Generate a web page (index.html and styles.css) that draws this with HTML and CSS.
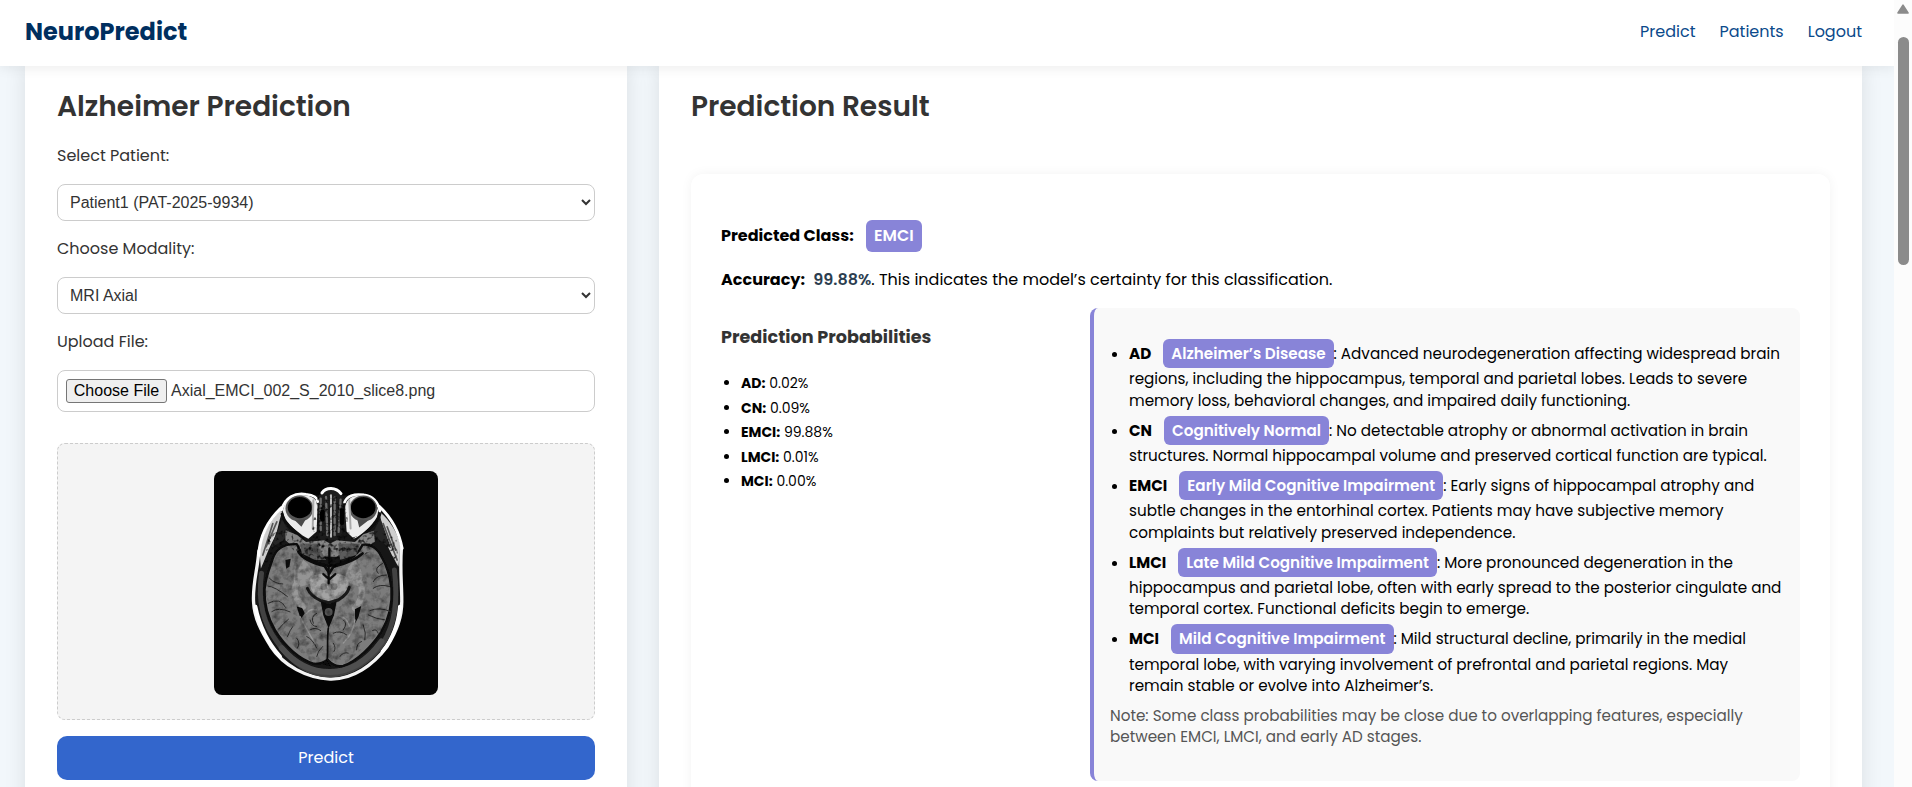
FILE: index.html
```html
<!DOCTYPE html>
<html lang="en">
<head>
<meta charset="utf-8">
<title>NeuroPredict</title>
<link rel="stylesheet" href="styles.css">
</head>
<body>
<div class="page">
  <header class="navbar">
    <div class="logo">NeuroPredict</div>
    <nav class="links"><a>Predict</a><a>Patients</a><a>Logout</a></nav>
  </header>
  <main class="main">
    <section class="panel form-panel">
      <h2 class="title">Alzheimer Prediction</h2>
      <label class="label">Select Patient:</label>
      <select class="select"><option>Patient1 (PAT-2025-9934)</option></select>
      <label class="label">Choose Modality:</label>
      <select class="select"><option>MRI Axial</option></select>
      <label class="label">Upload File:</label>
      <div class="file"><button class="choose">Choose File</button><span>Axial_EMCI_002_S_2010_slice8.png</span></div>
      <div class="preview">
        <svg class="scan" viewBox="41 32 674 674">
          <defs>
            <filter id="soft"><feGaussianBlur stdDeviation="2"/></filter>
            <filter id="grain" x="0" y="0" width="100%" height="100%">
              <feTurbulence type="fractalNoise" baseFrequency="0.05" numOctaves="3" seed="4"/>
              <feColorMatrix values="0 0 0 0 0  0 0 0 0 0  0 0 0 0 0  0.9 0 0 0 -0.36"/>
              <feComposite in2="SourceGraphic" operator="in"/>
            </filter>
            <filter id="speck" x="0" y="0" width="100%" height="100%">
              <feTurbulence type="fractalNoise" baseFrequency="0.08" numOctaves="2" seed="9"/>
              <feColorMatrix values="0 0 0 0 0  0 0 0 0 0  0 0 0 0 0  3 0 0 0 -1.55"/>
              <feComposite in2="SourceGraphic" operator="in"/>
            </filter>
          </defs>
          <rect x="41" y="32" width="674" height="674" fill="#030303"/>
          <g filter="url(#soft)" stroke-linecap="round" stroke-linejoin="round">
            <!-- scalp -->
            <path d="M244 140C205 175 180 225 172 275C170 330 158 370 160 425C162 480 185 520 212 560C250 620 320 655 390 658C460 660 520 615 562 560C592 510 607 470 606 420C606 370 604 330 606 260C596 215 570 170 535 135L500 105H290Z" fill="#161616"/>
            <path d="M176 272C172 330 157 370 160 425C162 475 184 515 212 560C250 618 320 655 390 658C460 660 520 615 562 560C592 510 607 470 606 420C606 370 600 330 605 262" fill="none" stroke="#f4f4f4" stroke-width="10"/>
            <path d="M166 440C178 500 200 545 240 590M600 440C596 490 580 535 548 575" fill="none" stroke="#fff" stroke-width="11"/>
            <!-- skull marrow -->
            <path d="M184 340C172 430 190 490 230 545C275 610 330 645 390 646C455 645 515 600 550 550C585 490 595 430 584 330" fill="none" stroke="#424242" stroke-width="15"/>
            <path d="M245 565C285 612 335 637 390 637C450 636 500 607 545 545" fill="none" stroke="#505050" stroke-width="18"/>
            <!-- temples -->
            <path d="M240 150C205 190 180 230 179 285L182 325C198 290 205 265 222 235C236 205 235 180 246 158Z" fill="#cfcfcf"/>
            <path d="M540 155C570 180 592 215 602 255L596 320C578 290 562 260 548 215Z" fill="#cfcfcf"/>
            <path d="M230 185L198 260M218 190L188 285M562 200L588 270M550 190L592 300" stroke="#555" stroke-width="5"/>
            <path d="M244 142C202 182 178 225 176 285M538 138C574 172 598 215 607 265" fill="none" stroke="#fff" stroke-width="9"/>
            <path d="M245 178C235 210 220 235 212 268C235 245 262 240 270 218Z" fill="#252525"/>
            <path d="M542 175L574 265C548 250 530 232 518 218Z" fill="#252525"/>
            <!-- nose -->
            <path d="M352 120L362 93Q392 74 422 95L436 122L440 190L418 240H362L346 190Z" fill="#1c1c1c"/>
            <path d="M366 98C378 80 408 80 423 100" fill="none" stroke="#fff" stroke-width="9"/>
            <path d="M362 115V210M378 110L382 225M404 112V225M422 118L416 215" stroke="#6c6c6c" stroke-width="7" stroke-dasharray="14 7"/>
            <path d="M393 105V230" stroke="#bbb" stroke-width="6"/>
            <path d="M367 155V178M426 150V188" stroke="#050505" stroke-width="14"/>
            <!-- orbits -->
            <path d="M248 152C254 118 280 103 312 105C340 107 356 120 352 146L350 214L325 236C304 226 272 198 255 180Z" fill="#ececec"/>
            <path d="M535 152C526 118 498 103 468 107C446 110 434 128 436 150L440 215L462 236C482 226 514 200 530 180Z" fill="#ececec"/>
            <path d="M244 150C254 112 285 96 318 102C340 104 352 112 353 124M434 126C440 108 462 99 492 104C520 108 535 128 540 152" fill="none" stroke="#fff" stroke-width="8"/>
            <ellipse cx="298" cy="145" rx="42" ry="39" fill="#555"/>
            <ellipse cx="490" cy="145" rx="42" ry="39" fill="#555"/>
            <ellipse cx="299" cy="142" rx="36" ry="32" fill="#020202"/>
            <ellipse cx="490" cy="142" rx="37" ry="32" fill="#020202"/>
            <path d="M284 180L318 176L304 200ZM472 177L506 180L478 202Z" fill="#4b4b4b"/>
            <path d="M340 120L338 205M448 120L452 205" stroke="#aaa" stroke-width="6"/>
            <path d="M246 162C252 190 285 215 310 240M540 162C530 190 495 222 470 240" fill="none" stroke="#0d0d0d" stroke-width="9"/>
            <!-- skull base -->
            <path d="M256 210L290 224L318 246L372 240L390 250L410 240L465 246L490 222L522 212L525 245L480 275L440 290H340L290 270L256 240Z" fill="#858585"/>
            <!-- brain -->
            <path d="M290 252C255 250 228 265 218 295C208 325 196 350 193 390C192 430 201 470 224 510C254 560 300 600 342 612C360 614 374 606 383 600C394 612 408 624 430 618C472 604 515 560 545 515C568 475 578 430 575 385C570 345 560 315 545 290C532 262 508 250 488 254C476 282 450 300 420 312L386 318L352 308C325 298 302 282 290 252Z" fill="#7c7c7c" stroke="#0b0b0b" stroke-width="7"/>
            <path d="M310 300Q350 330 340 370L300 380Q280 340 310 300ZM465 300Q430 330 440 365L478 380Q500 340 465 300Z" fill="#949494"/>
            <path d="M330 355Q350 335 388 345Q430 335 446 360Q450 395 418 412L388 425L352 412Q325 390 330 355Z" fill="#a4a4a4"/>
            <path d="M290 370Q270 400 310 440M482 370Q495 410 465 445" fill="none" stroke="#989898" stroke-width="18"/>
            <path d="M300 250L350 250L378 300L345 300L305 280ZM415 250L480 250L470 285L420 300Z" fill="#5c5c5c"/>
            <!-- cisterns -->
            <path d="M295 275C310 300 350 312 374 318L388 340L400 320C425 314 465 300 488 280" fill="none" stroke="#0b0b0b" stroke-width="8"/>
            <path d="M388 265V310M386 320V370M370 342L388 358L406 342" fill="none" stroke="#111" stroke-width="7"/>
            <path d="M322 385C330 405 345 415 362 422L386 428L415 420C432 410 444 398 448 382" fill="none" stroke="#1c1c1c" stroke-width="9"/>
            <path d="M362 424L386 432L410 424L402 466L386 505L370 466Z" fill="#090909"/>
            <circle cx="386" cy="456" r="12" fill="#555"/>
            <circle cx="371" cy="380" r="10" fill="#7c7c7c"/><circle cx="402" cy="380" r="10" fill="#7c7c7c"/>
            <path d="M290 440L306 444L314 460L302 478ZM465 448L484 438L476 470L466 490Z" fill="#080808"/>
            <path d="M256 300L272 296L268 320L258 326Z" fill="#111"/>
            <path d="M385 505C380 540 386 580 380 614" fill="none" stroke="#0a0a0a" stroke-width="5"/>
            <path d="M362 612L380 600L394 620Z" fill="#070707"/>
            <!-- sulci -->
            <path d="M208 355Q225 372 248 372M203 378Q225 380 262 410M204 430Q240 410 256 442M215 455Q235 440 270 456M235 508Q250 490 265 478M262 530Q270 510 278 500M292 565Q302 550 290 535M330 480Q335 500 350 500M350 460Q330 470 340 490M330 510Q345 500 362 512M320 530Q340 540 350 565M350 590Q352 575 368 560M548 310Q520 325 535 340M560 345Q530 345 520 365M570 380Q540 370 520 385M572 455Q540 440 510 452M555 480Q530 478 505 465M535 520Q530 505 518 512M490 495Q500 520 495 540M430 480Q445 490 430 510M400 520Q420 510 440 525M470 570Q470 550 485 545M400 550Q410 565 402 575M420 590Q430 575 445 580" fill="none" stroke="#2d2d2d" stroke-width="3"/>
            <path d="M300 470Q325 520 345 550M465 480Q460 520 430 550M285 320Q280 400 300 440M480 340Q495 400 478 435M320 460Q330 445 350 450M420 470Q440 470 448 500" fill="none" stroke="#9a9a9a" stroke-width="4"/>
          </g>
          <path d="M256 250L318 252L388 255L460 252L525 250L545 290L575 385L545 515L430 618L342 612L224 510L193 390L218 295Z" filter="url(#grain)"/>
          <path d="M205 225L256 205L330 240L352 110H436L450 235L520 210L590 230L596 320L550 250L485 290L388 330L300 290L255 245L190 320Z" filter="url(#speck)"/>
        </svg>
      </div>
      <button class="predict">Predict</button>
    </section>

    <section class="panel result-panel">
      <h2 class="title">Prediction Result</h2>
      <div class="card">
        <p class="row class-row"><b>Predicted Class:</b> <span class="badge">EMCI</span></p>
        <p class="row acc-row"><b>Accuracy:</b> <span class="acc">99.88%</span>. This indicates the model’s certainty for this classification.</p>
        <div class="cols">
          <div class="probs">
            <h4 class="subtitle">Prediction Probabilities</h4>
            <ul class="prob-list">
              <li><b>AD:</b> 0.02%</li>
              <li><b>CN:</b> 0.09%</li>
              <li><b>EMCI:</b> 99.88%</li>
              <li><b>LMCI:</b> 0.01%</li>
              <li><b>MCI:</b> 0.00%</li>
            </ul>
          </div>
          <div class="explain">
            <ul class="class-list">
              <li><b>AD</b> <span class="badge">Alzheimer’s Disease</span>: Advanced neurodegeneration affecting widespread brain<br>regions, including the hippocampus, temporal and parietal lobes. Leads to severe<br>memory loss, behavioral changes, and impaired daily functioning.</li>
              <li><b>CN</b> <span class="badge">Cognitively Normal</span>: No detectable atrophy or abnormal activation in brain<br>structures. Normal hippocampal volume and preserved cortical function are typical.</li>
              <li><b>EMCI</b> <span class="badge">Early Mild Cognitive Impairment</span>: Early signs of hippocampal atrophy and<br>subtle changes in the entorhinal cortex. Patients may have subjective memory<br>complaints but relatively preserved independence.</li>
              <li><b>LMCI</b> <span class="badge">Late Mild Cognitive Impairment</span>: More pronounced degeneration in the<br>hippocampus and parietal lobe, often with early spread to the posterior cingulate and<br>temporal cortex. Functional deficits begin to emerge.</li>
              <li><b>MCI</b> <span class="badge">Mild Cognitive Impairment</span>: Mild structural decline, primarily in the medial<br>temporal lobe, with varying involvement of prefrontal and parietal regions. May<br>remain stable or evolve into Alzheimer’s.</li>
            </ul>
            <p class="note">Note: Some class probabilities may be close due to overlapping features, especially<br>between EMCI, LMCI, and early AD stages.</p>
          </div>
        </div>
      </div>
    </section>
  </main>
</div>
<div class="scrollbar">
  <svg class="arrow" viewBox="0 0 12 10"><path d="M6 1.2L11 9H1Z" fill="#8b8b8b" stroke="#8b8b8b" stroke-width="1.6" stroke-linejoin="round"/></svg>
  <div class="thumb"></div>
</div>
</body>
</html>
```
FILE: styles.css
```css
* { box-sizing: border-box; }
body {
  margin: 0; height: 787px; overflow: hidden; display: flex;
  font-family: "Poppins", Inter, "Open Sans", sans-serif;
  font-size: 16px; line-height: 24px; color: #000; background: #f2f7fb;
}
.page { width: 1894px; height: 787px; overflow: hidden; display: flex; flex-direction: column; }
.navbar {
  height: 66px; flex: none; background: #fff; padding: 0 32px 3px 25px;
  display: flex; align-items: center; justify-content: space-between;
  box-shadow: 0 2px 12px rgba(0,0,0,.08); z-index: 2; position: relative;
}
.logo { font-size: 24px; font-weight: 700; color: #002f5f; white-space: nowrap; }
.links { display: flex; gap: 24px; color: #0b4a8b; }
.main { flex: 1; min-height: 0; display: flex; gap: 32px; padding: 0 32px 0 25px; overflow: hidden; }
.panel { background: #fff; height: 900px; padding: 23px 32px 0; box-shadow: 0 0 20px rgba(0,0,0,.1); flex: none; }
.form-panel { width: 602px; display: flex; flex-direction: column; }
.result-panel { width: 1203px; }
.title { margin: 0; height: 36px; line-height: 36px; font-size: 28px; font-weight: 600; color: #333; white-space: nowrap; }
.label { color: #333; height: 24px; margin-top: 19px; }
.select {
  height: 37px; margin-top: 16px; padding: 8px; border: 1px solid #ccc; border-radius: 8px;
  background: #fff; color: #333; font: 16px "Liberation Sans", Arial, sans-serif;
}
.select + .label { margin-top: 16px; }
.file {
  height: 42px; margin-top: 16px; padding-left: 8px; border: 1px solid #ccc; border-radius: 8px;
  display: flex; align-items: center; gap: 4px; color: #333; font: 16px "Liberation Sans", Arial, sans-serif;
}
.choose {
  width: 101px; height: 24px; padding: 0; border: 1px solid #767676; border-radius: 3px;
  background: #efefef; color: #000; font: 16px "Liberation Sans", Arial, sans-serif;
}
.preview {
  height: 277px; margin-top: 31px; padding-top: 3px; border: 1px dashed #ccc; border-radius: 8px; background: #f4f4f4;
  display: flex; align-items: center; justify-content: center;
}
.scan { width: 224px; height: 224px; border-radius: 8px; }
.predict { height: 44px; margin-top: 16px; border: 0; border-radius: 10px; background: #3366cc; color: #fff; font: inherit; }
.card {
  margin-top: 49px; height: 760px; padding: 46px 30px 0; border-radius: 12px; background: #fff;
  box-shadow: 0 0 12px rgba(0,0,0,.05);
}
.row { margin: 0; white-space: nowrap; }
.class-row { height: 32px; }
.badge {
  display: inline-block; background: #8884d8; color: #fff; font-weight: 600; border-radius: 6px;
  padding: 4px 8px; margin-left: 8px;
}
.acc-row { height: 24px; margin-top: 16px; }
.acc { color: #2c3e50; font-weight: 600; margin-left: 4px; }
.cols { display: flex; margin-top: 16px; }
.probs { width: 369px; }
.subtitle { margin: 15px 0 0; height: 28px; line-height: 28px; font-size: 17.6px; font-weight: 700; color: #333; }
.prob-list { margin: 20px 0 0; padding: 0 0 0 20px; font-size: 14px; line-height: 24.5px; }
.explain {
  width: 710px; height: 473px; border-left: 4px solid #8884d8; border-radius: 8px; background: #f9f9f9;
  padding: 31px 0 0 16px; font-size: 15.2px; line-height: 21.28px; white-space: nowrap;
}
.class-list { margin: 0; padding: 0 0 0 19px; }
.class-list li { margin-bottom: 4.8px; }
.note { margin: 8.5px 0 0; color: #555; }
.scrollbar { width: 18px; height: 787px; background: #fcfcfc; display: flex; flex-direction: column; align-items: center; }
.arrow { width: 12px; height: 10px; margin-top: 4px; }
.thumb { width: 11px; height: 228px; margin-top: 23px; border-radius: 6px; background: #8b8b8b; }
```
